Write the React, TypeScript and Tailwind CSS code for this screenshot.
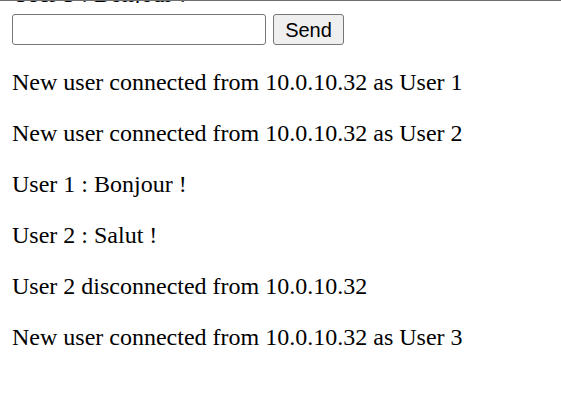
const messages = [
  'New user connected from 10.0.10.32 as User 1',
  'New user connected from 10.0.10.32 as User 2',
  'User 1 : Bonjour !',
  'User 2 : Salut !',
  'User 2 disconnected from 10.0.10.32',
  'New user connected from 10.0.10.32 as User 3',
];

export default function App() {
  return (
    <div className="min-h-screen border-t border-[#6e6e6e] bg-white text-black" style={{ fontFamily: '"Liberation Serif", "Times New Roman", serif' }}>
      {/* previous line, scrolled almost out of view */}
      <div className="flow-root h-[2px] overflow-hidden px-3">
        <div className="-mt-[20.5px] whitespace-nowrap text-[24px] leading-[27px]">User 3 : Bonjour !</div>
      </div>

      <form className="mt-[11px] flex items-center gap-[7px] px-3" onSubmit={(e) => e.preventDefault()}>
        <input
          type="text"
          className="h-[31px] w-[254px] rounded-[3px] border border-[#767676] bg-white px-1 text-[20px] outline-none"
          style={{ fontFamily: '"Liberation Sans", Arial, sans-serif' }}
        />
        <button
          type="submit"
          className="h-[31px] w-[71px] rounded-[3px] border border-[#767676] bg-[#efefef] text-[20px] leading-none text-black"
          style={{ fontFamily: '"Liberation Sans", Arial, sans-serif' }}
        >
          Send
        </button>
      </form>

      <div className="px-3">
        {messages.map((msg, i) => (
          <p key={i} className="my-6 whitespace-nowrap text-[24px] leading-[27px]">
            {msg}
          </p>
        ))}
      </div>
    </div>
  );
}
